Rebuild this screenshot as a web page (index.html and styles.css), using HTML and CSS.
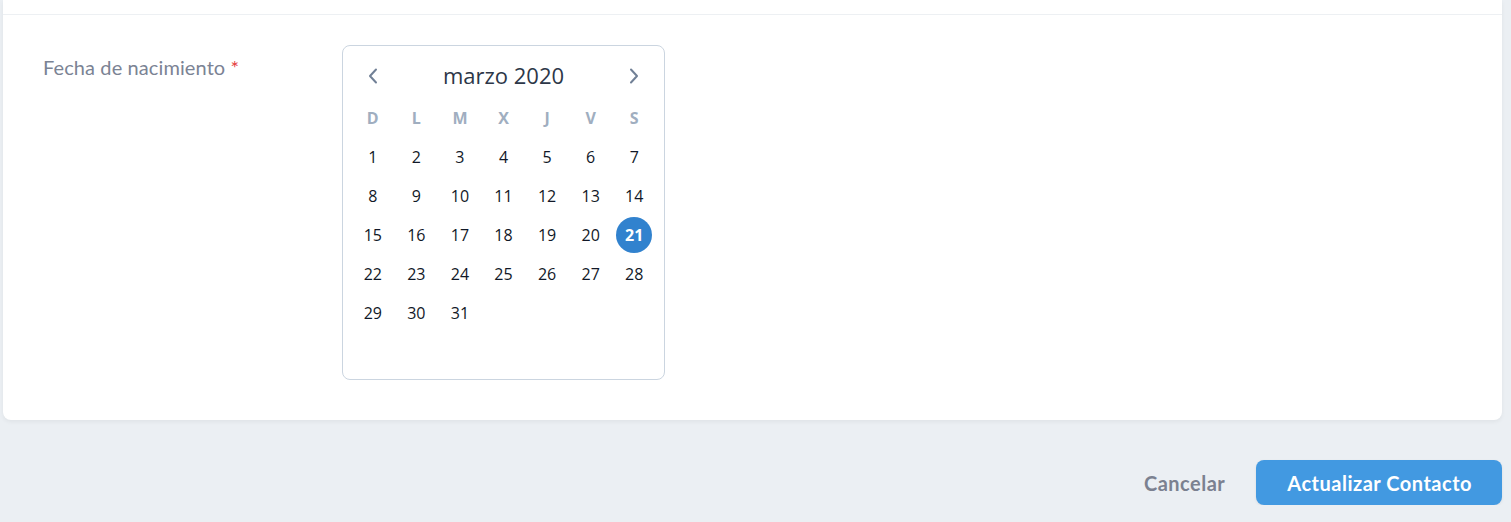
FILE: index.html
```html
<!DOCTYPE html>
<html lang="es">
<head>
<meta charset="utf-8">
<title>Editar contacto</title>
<link rel="stylesheet" href="styles.css">
</head>
<body>
<div class="page">
  <div class="card">
    <div class="card-top"></div>
    <div class="field-row">
      <label class="field-label">Fecha de nacimiento <span class="req">*</span></label>
      <div class="calendar">
        <div class="cal-head">
          <button class="nav" aria-label="Mes anterior">
            <svg width="10" height="16" viewBox="0 0 10 16"><path d="M8 1.5 L2 8 L8 14.5" fill="none" stroke="currentColor" stroke-width="2" stroke-linecap="round" stroke-linejoin="round"/></svg>
          </button>
          <div class="cal-title">marzo 2020</div>
          <button class="nav" aria-label="Mes siguiente">
            <svg width="10" height="16" viewBox="0 0 10 16"><path d="M2 1.5 L8 8 L2 14.5" fill="none" stroke="currentColor" stroke-width="2" stroke-linecap="round" stroke-linejoin="round"/></svg>
          </button>
        </div>
        <div class="cal-grid">
          <div class="wd">D</div><div class="wd">L</div><div class="wd">M</div><div class="wd">X</div><div class="wd">J</div><div class="wd">V</div><div class="wd">S</div>
          <div class="day">1</div><div class="day">2</div><div class="day">3</div><div class="day">4</div><div class="day">5</div><div class="day">6</div><div class="day">7</div>
          <div class="day">8</div><div class="day">9</div><div class="day">10</div><div class="day">11</div><div class="day">12</div><div class="day">13</div><div class="day">14</div>
          <div class="day">15</div><div class="day">16</div><div class="day">17</div><div class="day">18</div><div class="day">19</div><div class="day">20</div><div class="day"><span class="sel">21</span></div>
          <div class="day">22</div><div class="day">23</div><div class="day">24</div><div class="day">25</div><div class="day">26</div><div class="day">27</div><div class="day">28</div>
          <div class="day">29</div><div class="day">30</div><div class="day">31</div><div class="day"></div><div class="day"></div><div class="day"></div><div class="day"></div>
          <div class="day"></div><div class="day"></div><div class="day"></div><div class="day"></div><div class="day"></div><div class="day"></div><div class="day"></div>
        </div>
      </div>
    </div>
  </div>
  <div class="actions">
    <button class="btn-cancel">Cancelar</button>
    <button class="btn-primary">Actualizar Contacto</button>
  </div>
</div>
</body>
</html>
```

FILE: styles.css
```css
html, body {
  margin: 0;
  padding: 0;
  background: #ebeff3;
  font-family: "Open Sans", "Noto Sans", sans-serif;
}

.page {
  padding: 0 9px 0 3px;
}

.card {
  background: #ffffff;
  border-radius: 0 0 8px 8px;
  box-shadow: 0 2px 4px rgba(0, 0, 0, 0.05);
}

.card-top {
  height: 14px;
  border-bottom: 1px solid #edf0f3;
}

.field-row {
  display: flex;
  padding: 30px 40px 40px 40px;
}

.field-label {
  width: 299px;
  flex: none;
  padding-top: 10px;
  font-family: "Lato", sans-serif;
  font-size: 20px;
  letter-spacing: 0.1px;
  color: #7b8394;
  line-height: 24px;
}

.req {
  color: #e53e3e;
}

.calendar {
  border: 1px solid #cbd5e0;
  border-radius: 8px;
  padding: 8px 8px 8px 8px;
  width: 305px;
}

.cal-head {
  display: grid;
  grid-template-columns: repeat(7, 1fr);
  height: 44px;
  align-items: center;
}

.cal-title {
  grid-column: 2 / 7;
  text-align: center;
  font-size: 22px;
  color: #2d3748;
  margin-top: -2px;
}

.nav {
  background: none;
  border: 0;
  padding: 0;
  color: #718096;
  display: flex;
  justify-content: center;
  align-items: center;
  height: 44px;
}

.cal-grid {
  display: grid;
  grid-template-columns: repeat(7, 1fr);
  grid-auto-rows: 39px;
}

.wd {
  display: flex;
  align-items: center;
  justify-content: center;
  font-weight: 700;
  font-size: 16px;
  color: #a0aec0;
}

.day {
  display: flex;
  align-items: center;
  justify-content: center;
  font-size: 16px;
  font-weight: 500;
  color: #111827;
}

.sel {
  width: 36px;
  height: 36px;
  border-radius: 50%;
  background: #3182ce;
  color: #ffffff;
  font-weight: 700;
  display: flex;
  align-items: center;
  justify-content: center;
}

.actions {
  display: flex;
  justify-content: flex-end;
  align-items: center;
  gap: 31px;
  margin-top: 40px;
}

.btn-cancel {
  background: none;
  border: 0;
  padding: 0;
  font-family: "Lato", sans-serif;
  font-weight: 700;
  font-size: 20px;
  letter-spacing: 0.5px;
  color: #7b8190;
}

.btn-primary {
  height: 45px;
  padding: 0 30px 0 31px;
  border: 0;
  border-radius: 8px;
  background: #4299e1;
  color: #ffffff;
  font-family: "Lato", sans-serif;
  font-weight: 700;
  font-size: 20px;
  letter-spacing: 0.5px;
  box-shadow: 0 1px 3px rgba(0, 0, 0, 0.08);
}
```
